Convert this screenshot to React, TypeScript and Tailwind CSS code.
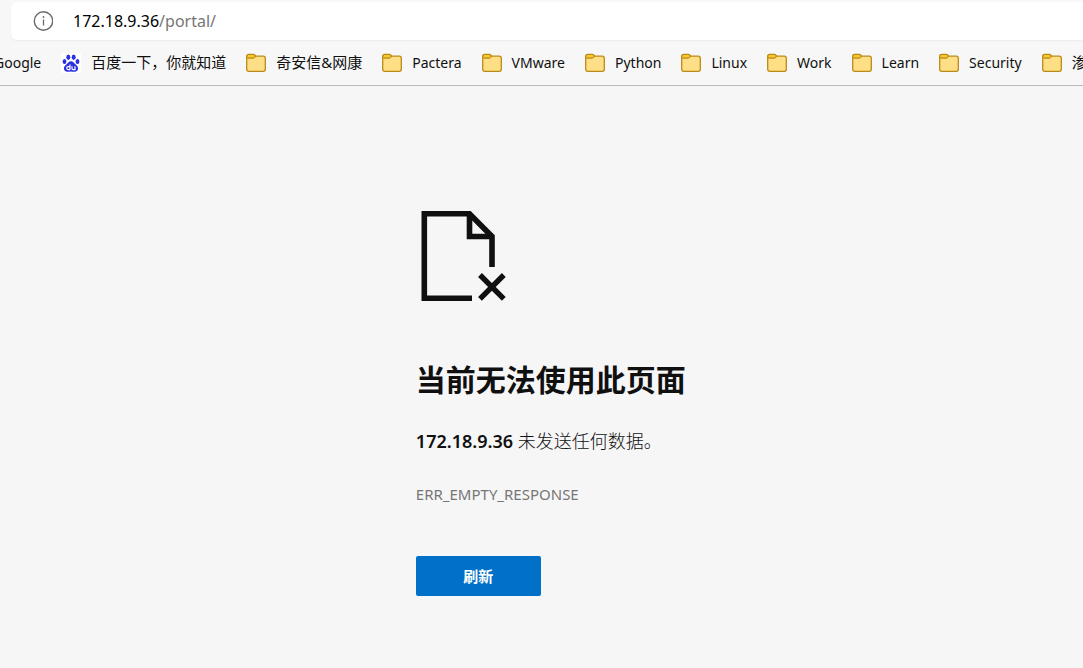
import React from 'react';

interface Bookmark {
  label: string;
  icon: 'none' | 'baidu' | 'folder';
  chinese?: boolean;
}

const bookmarks: Bookmark[] = [
  { label: 'Google', icon: 'none' },
  { label: '百度一下，你就知道', icon: 'baidu', chinese: true },
  { label: '奇安信&网康', icon: 'folder', chinese: true },
  { label: 'Pactera', icon: 'folder' },
  { label: 'VMware', icon: 'folder' },
  { label: 'Python', icon: 'folder' },
  { label: 'Linux', icon: 'folder' },
  { label: 'Work', icon: 'folder' },
  { label: 'Learn', icon: 'folder' },
  { label: 'Security', icon: 'folder' },
  { label: '渗', icon: 'folder', chinese: true },
];

const InfoIcon: React.FC = () => (
  <svg className="w-5 h-5 shrink-0" viewBox="0 0 20 20" fill="none" stroke="#6b6b6b">
    <circle cx="10.5" cy="10" r="9.2" strokeWidth={1.4} />
    <path d="M10.5 8.5v6" strokeWidth={1.3} />
    <circle cx="10.5" cy="6" r="0.9" fill="#6b6b6b" stroke="none" />
  </svg>
);

const FolderIcon: React.FC = () => (
  <svg className="w-5 h-5 shrink-0" viewBox="0 0 20 20">
    <path
      d="M.7 3.7c0-1.4.8-2.2 2-2.2h4.6c.6 0 1 .2 1.3.6l.9 1.1h7.8c1.2 0 2 .8 2 2v11.1c0 1.2-.8 2-2 2H2.700c-1.200 0-2-.8-2-2z"
      fill="#ffdf85"
      stroke="#b98a17"
      strokeWidth={1.3}
    />
    <path
      d="M.7 3.4c0-1.200.8-1.900 2-1.900h4.800c.6 0 1 .2 1.300.6l.7 1.100-1 1.300c-.3.4-.7.6-1.300.6H2.600C1.400 5.100.7 4.500.7 3.400z"
      fill="#f9c62e"
      stroke="#b98a17"
      strokeWidth={1.1}
    />
  </svg>
);

const BaiduIcon: React.FC = () => (
  <svg className="w-5 h-5 shrink-0" viewBox="0 0 20 20">
    <rect width="20" height="20" rx="2" fill="#fff" />
    <g fill="#2a2fe0">
      <ellipse cx="7.3" cy="4.3" rx="2" ry="2.7" />
      <ellipse cx="12.7" cy="4.3" rx="2" ry="2.7" />
      <ellipse cx="3.5" cy="8.6" rx="1.9" ry="2.5" />
      <ellipse cx="16.5" cy="8.4" rx="1.9" ry="2.5" />
      <path d="M10 8.3c2.2 0 2.9 1.7 4.4 3 1.7 1.5 2.7 2.5 2.7 4.3 0 2-1.5 3.2-3.4 3.2-1.3 0-2.3-.3-3.7-.3s-2.4.3-3.7.3c-1.9 0-3.4-1.2-3.4-3.2 0-1.8 1-2.8 2.7-4.3 1.5-1.3 2.2-3 4.4-3z" />
    </g>
    <g fill="none" stroke="#fff" strokeWidth={1.2}>
      <path d="M9 11.4v5.4M9 16.6H7.200c-1 0-1.500-.5-1.500-1.500s.5-1.500 1.500-1.500H9" />
      <path d="M11 13.3v2.200c0 .8.4 1.100 1.100 1.100h1.900v-3.300" />
    </g>
  </svg>
);

const BrokenPageIcon: React.FC = () => (
  <svg className="w-[92px] h-[92px]" viewBox="0 0 92 92" fill="none" stroke="#101010" strokeWidth={5.6}>
    <path d="M56 88.2H8.3V3.8h45.2L76 26.500V57" />
    <path d="M53.5 3.8V26.500H76" />
    <path d="M64 65l23.800 23.800M87.800 65L64 88.800" strokeWidth={5.4} />
  </svg>
);

const BookmarkItem: React.FC<{ bookmark: Bookmark }> = ({ bookmark }) => (
  <a href="#" className="flex shrink-0 items-center gap-[10px] whitespace-nowrap">
    {bookmark.icon === 'folder' && <FolderIcon />}
    {bookmark.icon === 'baidu' && <BaiduIcon />}
    <span className={bookmark.chinese ? 'text-[15px]' : 'text-sm'}>{bookmark.label}</span>
  </a>
);

const App: React.FC = () => {
  return (
    <div className="min-h-screen overflow-hidden bg-[#f6f6f6] font-['Noto_Sans','Noto_Sans_CJK_SC',sans-serif] text-[#101010]">
      <header className="border-b border-[#b9bbba] bg-[#f7f7f7]">
        <div className="pt-[2px] pl-[11px]">
          <div className="flex h-[38px] items-center gap-5 rounded-l-md bg-white pl-[22px] shadow-xs">
            <InfoIcon />
            <div className="text-base text-black">
              172.18.9.36<span className="text-[#767676]">/portal/</span>
            </div>
          </div>
        </div>
        <nav className="-ml-1.5 flex h-[45px] items-center gap-5 overflow-hidden">
          {bookmarks.map((bookmark) => (
            <BookmarkItem key={bookmark.label} bookmark={bookmark} />
          ))}
        </nav>
      </header>

      <main className="pt-[124px] pl-[38.4%]">
        <BrokenPageIcon />
        <h1 className="mt-[56px] text-[30px] leading-[44px] font-bold">当前无法使用此页面</h1>
        <p className="mt-[25px] text-lg leading-7 font-light">
          <strong className="font-semibold">172.18.9.36</strong> 未发送任何数据。
        </p>
        <p className="mt-[29px] text-[15px] leading-5 text-[#767676]">ERR_EMPTY_RESPONSE</p>
        <button
          type="button"
          className="mt-[52px] h-10 w-[125px] rounded-xs bg-[#0070c9] text-[15px] font-bold text-white"
        >
          刷新
        </button>
      </main>
    </div>
  );
};

export default App;
